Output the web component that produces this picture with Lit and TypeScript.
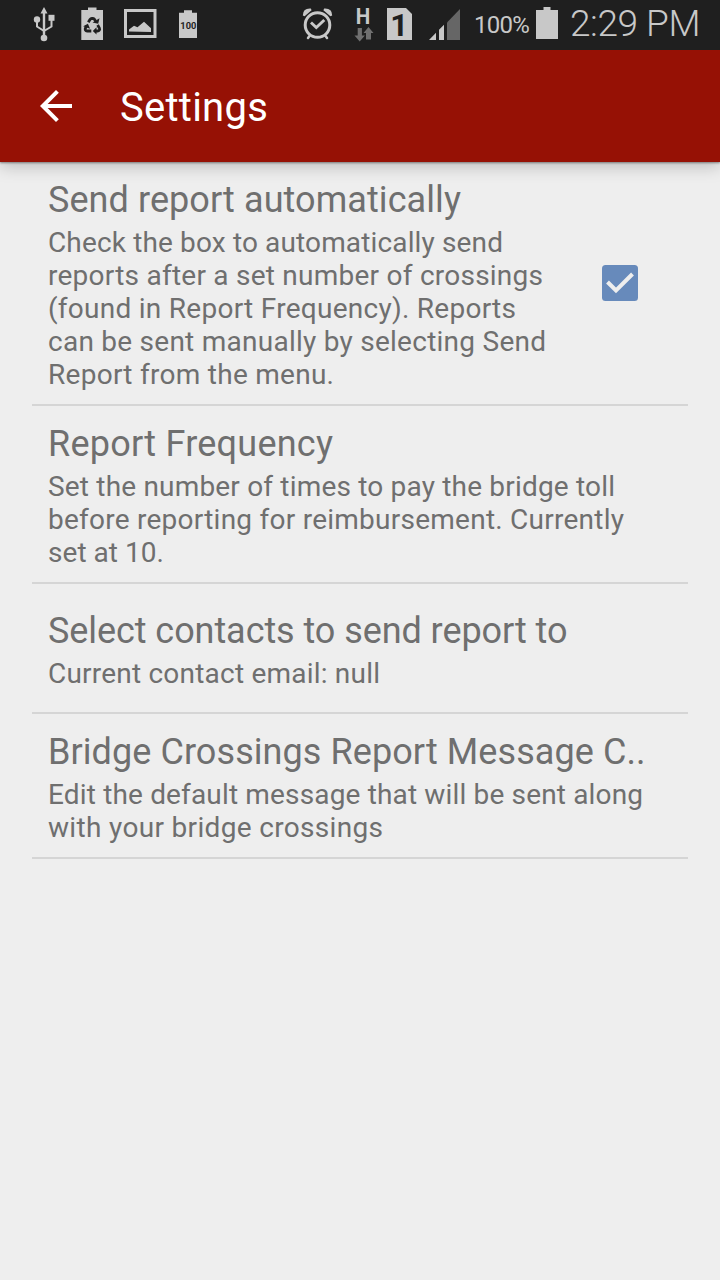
import { LitElement, html, svg, css, nothing } from "lit";
import { customElement } from "lit/decorators.js";

interface Line {
  text: string;
  width: number;
}

interface Setting {
  title: Line;
  summary: Line[];
  checked?: boolean;
}

const settings: Setting[] = [
  {
    title: { text: "Send report automatically", width: 413 },
    summary: [
      { text: "Check the box to automatically send", width: 455 },
      { text: "reports after a set number of crossings", width: 495 },
      { text: "(found in Report Frequency). Reports", width: 468 },
      { text: "can be sent manually by selecting Send", width: 498 },
      { text: "Report from the menu.", width: 286 },
    ],
    checked: true,
  },
  {
    title: { text: "Report Frequency", width: 285 },
    summary: [
      { text: "Set the number of times to pay the bridge toll", width: 567 },
      { text: "before reporting for reimbursement. Currently", width: 576 },
      { text: "set at 10.", width: 116 },
    ],
  },
  {
    title: { text: "Select contacts to send report to", width: 519.5 },
    summary: [{ text: "Current contact email: null", width: 332 }],
  },
  {
    title: { text: "Bridge Crossings Report Message C..", width: 597.5 },
    summary: [
      { text: "Edit the default message that will be sent along", width: 595 },
      { text: "with your bridge crossings", width: 335 },
    ],
  },
];

@customElement("status-bar")
class StatusBar extends LitElement {
  static styles = css`
    :host {
      display: flex;
      height: 50px;
      background: #1f1f1f;
      color: #c8c8c8;
      font-family: Roboto, sans-serif;
      white-space: nowrap;
    }
    svg {
      display: block;
      flex: none;
    }
    .percent {
      width: 62px;
      padding-left: 13px;
      box-sizing: border-box;
      font-size: 24px;
      line-height: 50px;
      letter-spacing: -0.7px;
    }
    .time {
      padding-left: 9px;
      font-size: 37px;
      font-weight: 300;
      line-height: 48px;
      letter-spacing: -0.45px;
    }
  `;

  render() {
    return html`
      <svg width="290" height="50" viewBox="0 0 290 50" fill="#c8c8c8">
        <path d="M40.500 13.500 44 7l3.500 6.500h-2.300V35h-2.400V13.500z" />
        <circle cx="44" cy="38" r="3.300" />
        <circle cx="37" cy="19.500" r="3.200" />
        <path d="M48.500 14.800h6v6h-6z" />
        <path d="M37 20v6.500l7 4.500M51.500 19v7.500L44 31" fill="none" stroke="#c8c8c8" stroke-width="2" />
        <path d="M88 7.500h8.500V10h6.500v30H81.300V10H88z" />
        <g fill="none" stroke="#1f1f1f" stroke-width="2.800">
          <path d="M88.300 22.300 90 19.600q.7-1.100 1.800-1.100h1.200q1 0 1.600 1l1 1.700" />
          <path d="m97.600 25 1.800 3.100q.6 1.200-.1 2.100-.6.800-1.700.8h-1.600" />
          <path d="M91.300 31h-4.200q-1.200 0-1.700-1-.5-.9.100-2l1-1.700" />
        </g>
        <g fill="#1f1f1f">
          <path d="m92.500 22.500 5.700 1.200 1.300-5.500zM96.500 27.300 92.800 31l3.700 3.600zM83.200 26.300l4.700-2.500 2.200 5z" />
        </g>
        <path d="M124 9h32.500v29H124zM127 12v23h26.500V12z" fill-rule="evenodd" />
        <path d="m129 31.500v-2l5-3.800 3.500 1.500 6.500-5.500 7 6.500v3.800z" />
        <path d="M184 10.300h8v2.500h5V38h-18V12.800h5z" />
        <text x="188.300" y="29" fill="#1f1f1f" font-size="9.800" font-weight="700" text-anchor="middle" textLength="16" lengthAdjust="spacingAndGlyphs">100</text>
      </svg>
      <svg width="171" height="50" viewBox="290 0 171 50" fill="#c8c8c8">
        <g fill="none" stroke="#c8c8c8">
          <circle cx="317.500" cy="25" r="12.300" stroke-width="3" />
          <path d="m311 22.500 5.300 5 8-7.500" stroke-width="2.900" />
          <path d="m309.500 36-1.500 2M325.500 36l1.500 2" stroke-width="2.500" stroke-linecap="round" />
        </g>
        <path d="M302.800 15.500q0-7.500 8-7l.8 1.800-7 6zM332.200 15.500q0-7.500-8-7l-.8 1.800 7 6z" />
        <text x="355.700" y="23.700" font-size="21.500" font-weight="700" textLength="14.500" lengthAdjust="spacingAndGlyphs">H</text>
        <path fill="#707070" d="M357.700 28h4.200v7.500h3l-5.200 6-5.200-6h3.200zM366 39.500v-6.500h-2.500l5-6 5 6H371v6.500z" />
        <path d="M387 8h19l6 6v26h-25z" />
        <text x="390.300" y="36" fill="#1f1f1f" font-size="32" font-weight="700" textLength="18" lengthAdjust="spacingAndGlyphs">1</text>
        <path d="M429 40l7-7.300V40zM439 40V29.700l5-5V40z" />
        <path fill="#666" d="M447 40V22.500L460 9v31z" />
      </svg>
      <div class="percent">100%</div>
      <svg width="38" height="50" viewBox="523 0 38 50" fill="#c8c8c8">
        <path d="M543.500 7h7v3h7.500v29h-22V10h7.500z" />
      </svg>
      <div class="time">2:29 PM</div>
    `;
  }
}

@customElement("setting-row")
class SettingRow extends LitElement {
  static properties = { setting: { attribute: false } };
  declare setting: Setting;

  static styles = css`
    :host {
      display: flex;
      align-items: center;
      box-sizing: border-box;
      min-height: 130px;
      margin: 0 32px;
      padding: 0 16px;
      border-bottom: 2px solid #d5d5d5;
      color: #6f6f6f;
    }
    .body {
      flex: 1;
      padding: 16px 0 13px;
    }
    .title,
    .line {
      display: block;
      overflow: visible;
    }
    .title {
      height: 43px;
      font-size: 36px;
      margin-bottom: 5px;
    }
    .line {
      height: 33px;
      font-size: 28px;
    }
    .check {
      flex: none;
      display: block;
      margin-right: 34px;
    }
  `;

  private text(line: Line, cls: string, baseline: number) {
    return html`<svg class=${cls} width=${line.width} fill="currentColor">
      ${svg`<text x="0" y=${baseline} textLength=${line.width}>${line.text}</text>`}
    </svg>`;
  }

  render() {
    const s = this.setting;
    return html`
      <div class="body">
        ${this.text(s.title, "title", 34)}
        ${s.summary.map((l) => this.text(l, "line", 26))}
      </div>
      ${s.checked
        ? html`<svg class="check" width="36" height="36" viewBox="0 0 36 36">
            <rect width="36" height="36" rx="3.500" fill="#678abb" />
            <path d="m5.500 17 8.500 8.500L30.500 9" fill="none" stroke="#eee" stroke-width="4" />
          </svg>`
        : nothing}
    `;
  }
}

@customElement("app-root")
class AppRoot extends LitElement {
  static styles = css`
    :host {
      display: flex;
      flex-direction: column;
      height: 1280px;
      background: #eee;
      font-family: Roboto, sans-serif;
      overflow: hidden;
    }
    .bar {
      flex: none;
      display: flex;
      align-items: center;
      height: 112px;
      background: #961105;
      color: #fff;
      box-shadow: 0 1px 2px rgba(0, 0, 0, 0.4), 0 4px 16px rgba(0, 0, 0, 0.22);
    }
    status-bar {
      position: relative;
      z-index: 1;
    }
    .back {
      margin: 0 48px 0 40px;
    }
    h1 {
      margin: 3px 0 0;
      font-size: 40px;
      font-weight: 400;
      line-height: 48px;
      letter-spacing: 0.25px;
    }
  `;

  render() {
    return html`
      <status-bar></status-bar>
      <header class="bar">
        <svg class="back" width="32" height="32" viewBox="4 4 16 16" fill="#fff">
          <path d="M20 11H7.830l5.590-5.590L12 4l-8 8 8 8 1.410-1.410L7.830 13H20v-2z" />
        </svg>
        <h1>Settings</h1>
      </header>
      <main>${settings.map((s) => html`<setting-row .setting=${s}></setting-row>`)}</main>
    `;
  }
}
